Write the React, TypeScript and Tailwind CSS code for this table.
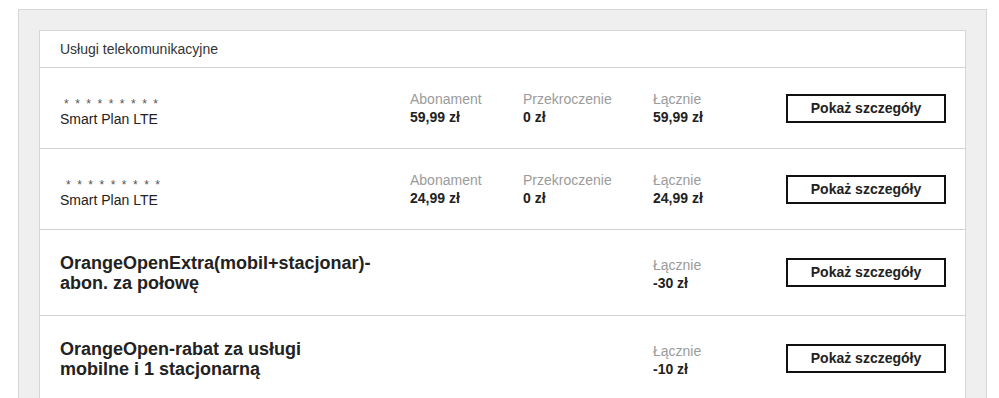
import React from "react";

type Row =
  | { kind: "plan"; name: string; abon: string; over: string; total: string; shift: string }
  | { kind: "promo"; line1: string; line2: string; total: string };

const rows: Row[] = [
  { kind: "plan", name: "Smart Plan LTE", abon: "59,99 zł", over: "0 zł", total: "59,99 zł", shift: "ml-[4px]" },
  { kind: "plan", name: "Smart Plan LTE", abon: "24,99 zł", over: "0 zł", total: "24,99 zł", shift: "ml-[6px]" },
  { kind: "promo", line1: "OrangeOpenExtra(mobil+stacjonar)-", line2: "abon. za połowę", total: "-30 zł" },
  { kind: "promo", line1: "OrangeOpen-rabat za usługi", line2: "mobilne i 1 stacjonarną", total: "-10 zł" },
];

function Stat({ label, value }: { label: string; value: string }) {
  return (
    <div className="flex flex-col">
      <span className="text-[14px] leading-[18px] text-[#9b9b9b]">{label}</span>
      <span className="text-[14px] leading-[18px] font-bold text-[#222]">{value}</span>
    </div>
  );
}

function DetailsButton() {
  return (
    <button className="w-[160px] h-[29px] border-2 border-[#111] bg-white text-[14px] font-bold text-[#222] flex items-center justify-center">
      Pokaż szczegóły
    </button>
  );
}

export default function App() {
  return (
    <div className="w-[999px] h-[398px] overflow-hidden bg-white font-['Liberation_Sans',Arial,sans-serif]">
      <div className="h-[9px] bg-white" />
      <div className="ml-[18px] w-[969px] h-[389px] border-t border-l border-r border-[#d6d6d6] bg-[#efefef] px-[20px] pt-[20px]">
        <div className="bg-white border border-[#d6d6d6] border-b-0">
          <div className="h-[37px] border-b border-[#d2d2d2] flex items-center px-[20px] text-[14px] text-[#333]">
            Usługi telekomunikacyjne
          </div>
          {rows.map((r, i) =>
            r.kind === "plan" ? (
              <div key={i} className="h-[81px] border-b border-[#d2d2d2] flex items-center pl-[20px] pr-[19px]">
                <div className="flex-1 flex flex-col mt-[10px]">
                  <span className={`${r.shift} text-[12px] leading-[12px] tracking-[6.5px] text-[#555]`}>*********</span>
                  <span className="text-[14px] leading-[18px] text-[#222]">{r.name}</span>
                </div>
                <div className="w-[113px]">
                  <Stat label="Abonament" value={r.abon} />
                </div>
                <div className="w-[130px]">
                  <Stat label="Przekroczenie" value={r.over} />
                </div>
                <div className="w-[133px]">
                  <Stat label="Łącznie" value={r.total} />
                </div>
                <DetailsButton />
              </div>
            ) : (
              <div key={i} className="h-[86px] border-b border-[#d2d2d2] flex items-center pl-[20px] pr-[19px]">
                <div className="flex-1 text-[18px] leading-[20px] font-bold text-[#222]">
                  {r.line1}
                  <br />
                  {r.line2}
                </div>
                <div className="w-[133px] mt-[2px]">
                  <Stat label="Łącznie" value={r.total} />
                </div>
                <DetailsButton />
              </div>
            )
          )}
        </div>
      </div>
    </div>
  );
}
